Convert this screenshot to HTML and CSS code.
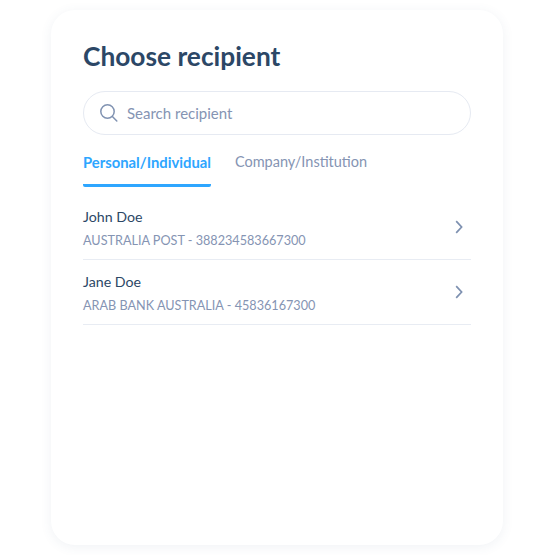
FILE: index.html
```html
<!DOCTYPE html>
<html lang="en">
<head>
    <meta charset="UTF-8">
    <meta name="viewport" content="width=device-width, initial-scale=1.0">
    <title>Choose recipient</title>
    <link rel="stylesheet" href="styles.css">
</head>
<body>
    <div class="card">
        <h1>Choose recipient</h1>

        <!-- Search -->
        <div class="search">
            <svg class="search-icon" width="18" height="18" viewBox="0 0 18 18" fill="none">
                <circle cx="7.5" cy="7.5" r="6.7" />
                <path d="M12.4 12.4 L16.8 17" />
            </svg>
            <span class="search-text">Search recipient</span>
        </div>

        <!-- Tabs -->
        <div class="tabs">
            <div class="tab active">Personal/Individual</div>
            <div class="tab">Company/Institution</div>
        </div>

        <!-- Recipients -->
        <div class="recipients">
            <div class="recipient">
                <div class="recipient-info">
                    <div class="recipient-name">John Doe</div>
                    <div class="recipient-account">AUSTRALIA POST - 388234583667300</div>
                </div>
                <svg class="chevron" width="8" height="14" viewBox="0 0 8 14" fill="none">
                    <path d="M1.2 1.2 L6.6 7 L1.2 12.8" />
                </svg>
            </div>
            <div class="recipient">
                <div class="recipient-info">
                    <div class="recipient-name">Jane Doe</div>
                    <div class="recipient-account">ARAB BANK AUSTRALIA - 45836167300</div>
                </div>
                <svg class="chevron" width="8" height="14" viewBox="0 0 8 14" fill="none">
                    <path d="M1.2 1.2 L6.6 7 L1.2 12.8" />
                </svg>
            </div>
        </div>
    </div>
</body>
</html>
```

FILE: styles.css
```css
body {
    font-family: "Lato", "Open Sans", sans-serif;
    margin: 0;
    padding: 10px 51px;
    background-color: #fff;
    color: #2c4766;
}

.card {
    box-sizing: border-box;
    width: 452px;
    height: 535px;
    padding: 30px 32px;
    background-color: #fff;
    border-radius: 24px;
    box-shadow: 0 2px 12px rgba(60, 90, 130, 0.08);
}

h1 {
    font-size: 26.3px;
    line-height: 32px;
    font-weight: 700;
    margin: 0;
    color: #2c4766;
}

/* Search */
.search {
    display: flex;
    align-items: center;
    gap: 9px;
    height: 44px;
    margin-top: 19px;
    padding-left: 16px;
    border: 1px solid #e6eaf2;
    border-radius: 22px;
    box-sizing: border-box;
}
.search-icon {
    stroke: #8193b2;
    stroke-width: 1.5;
    stroke-linecap: round;
}
.search-text {
    font-size: 15px;
    color: #8594b3;
}

/* Tabs */
.tabs {
    display: flex;
    gap: 24px;
    margin-top: 17px;
}
.tab {
    font-size: 14.5px;
    line-height: 20px;
    padding-bottom: 12px;
    color: #8594b3;
}
.tab.active {
    font-size: 14.8px;
    font-weight: 700;
    color: #2ea6ff;
    border-bottom: 3px solid #2ea6ff;
    border-radius: 2px;
}

/* Recipients */
.recipients {
    margin-top: 8px;
}
.recipient {
    display: flex;
    justify-content: space-between;
    align-items: center;
    height: 65px;
    box-sizing: border-box;
    padding-right: 8px;
    border-bottom: 1px solid #e8ecf3;
}
.recipient-info {
    padding-top: 1px;
}
.recipient-name {
    font-size: 14.2px;
    line-height: 20px;
    color: #2c4766;
}
.recipient-account {
    font-size: 12.65px;
    line-height: 16px;
    margin-top: 6px;
    color: #8594b3;
}
.chevron {
    stroke: #7d90b0;
    stroke-width: 1.7;
}
```
